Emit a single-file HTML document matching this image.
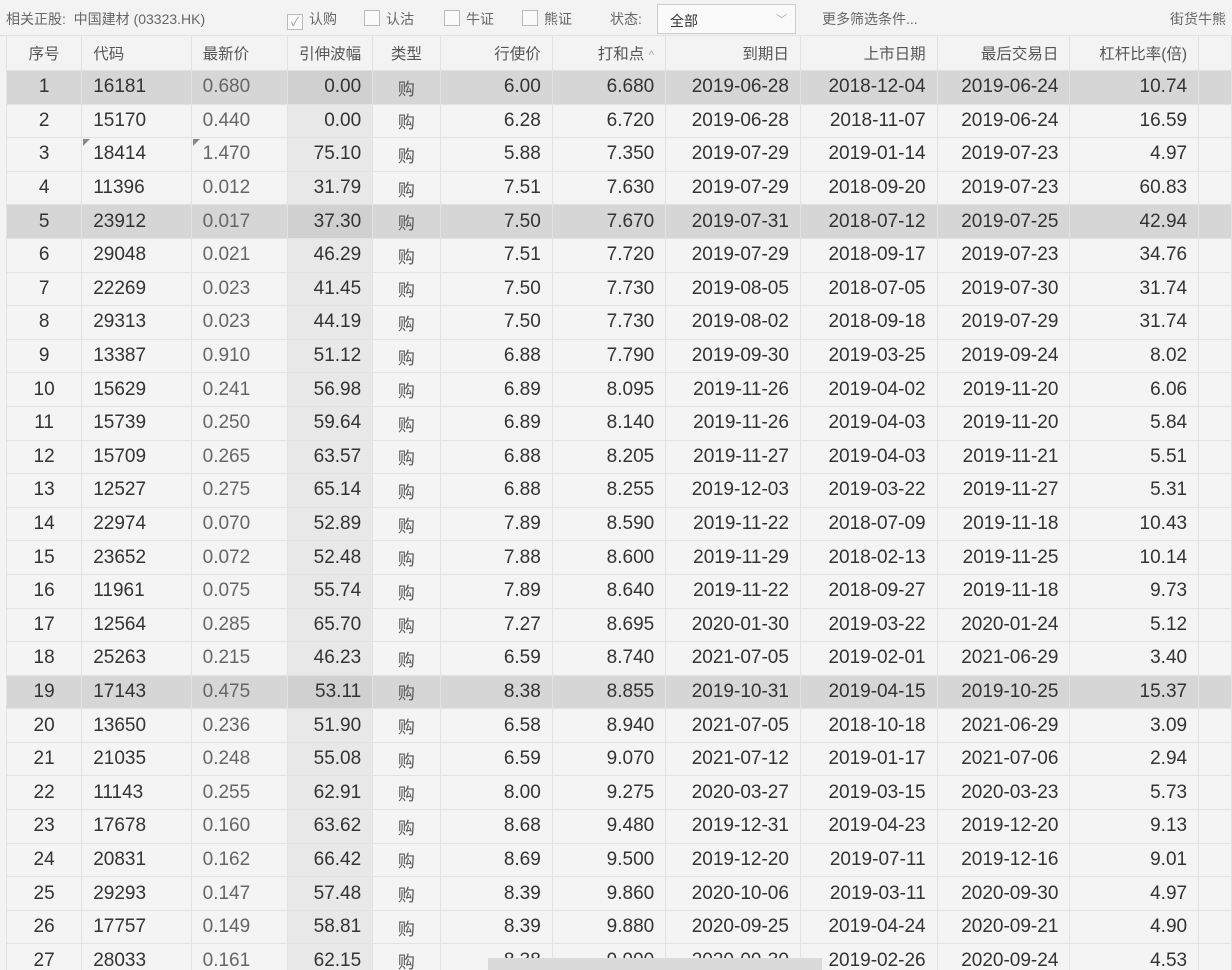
<!DOCTYPE html>
<html><head><meta charset="utf-8"><style>
html,body{margin:0;width:1232px;height:970px;overflow:hidden}
body{background:#f3f3f3;font-family:"Liberation Sans","Noto Sans CJK SC",sans-serif;color:#333;position:relative}
.tb{position:absolute;top:0;left:0;width:1232px;height:35px;background:#f3f3f3;border-bottom:1px solid #dcdcdc;font-size:14px;color:#666}
.tb span{position:absolute;top:9px;white-space:nowrap}
.cb{display:inline-block;width:14px;height:14px;border:1px solid #bbb;background:#fafafa;vertical-align:-2px;margin-right:6px;font-size:12px;line-height:14px;text-align:center;color:#999;font-style:normal}
.dd{position:absolute;left:657px;top:4px;width:139px;height:30px;border:1px solid #ccc;background:#fafafa;box-sizing:border-box}
table{position:absolute;left:6px;top:35px;border-collapse:collapse;table-layout:fixed;font-size:19px}
td,th{border:1px solid #e2e2e2;padding:0 11px;white-space:nowrap;overflow:hidden;box-sizing:border-box}
th{font-weight:normal;font-size:15.5px;color:#555;height:35px}
tr.d td{height:33.6px}
td{text-align:right;background:#f4f4f4}
td:nth-child(1),td:nth-child(5){text-align:center;padding:0}
td:nth-child(2),td:nth-child(3){text-align:left}
td:nth-child(3){color:#666}
td:nth-child(4){background:#e8e8e8}
td:nth-child(5){color:#555;font-size:17px}
tr.h td{background:#d6d6d6}
tr.h td:nth-child(4){background:#d0d0d0}
th{text-align:right}th:nth-child(1),th:nth-child(5){text-align:center;padding:0}th:nth-child(2),th:nth-child(3){text-align:left}
.tri{position:relative}
.tri:before{content:"";position:absolute;left:1px;top:1px;border-top:7px solid #888;border-right:7px solid transparent}
.sb{position:absolute;left:488px;top:958px;width:334px;height:12px;background:#dadada}
</style></head><body>
<div class="tb">
<span style="left:6px">相关正股:&nbsp; 中国建材 (03323.HK)</span>
<span style="left:287px"><i class="cb">✓</i>认购</span>
<span style="left:364px"><i class="cb"></i>认沽</span>
<span style="left:444px"><i class="cb"></i>牛证</span>
<span style="left:522px"><i class="cb"></i>熊证</span>
<span style="left:610px">状态:</span>
<div class="dd"><span style="left:12px;top:6px;color:#333">全部</span><span style="left:118px;top:6px;color:#aaa;font-size:11px">﹀</span></div>
<span style="left:822px">更多筛选条件...</span>
<span style="left:1170px">街货牛熊</span>
</div>
<table>
<colgroup><col style="width:76px"><col style="width:110px"><col style="width:97px"><col style="width:81px"><col style="width:68px"><col style="width:113px"><col style="width:114px"><col style="width:135px"><col style="width:137px"><col style="width:133px"><col style="width:129px"><col style="width:33px"></colgroup>
<tr><th>序号</th><th>代码</th><th>最新价</th><th>引伸波幅</th><th>类型</th><th>行使价</th><th>打和点 <span style="color:#aaa;font-size:12px">^</span></th><th>到期日</th><th>上市日期</th><th>最后交易日</th><th>杠杆比率(倍)</th><th></th></tr>
<tr class="d h"><td>1</td><td>16181</td><td>0.680</td><td>0.00</td><td>购</td><td>6.00</td><td>6.680</td><td>2019-06-28</td><td>2018-12-04</td><td>2019-06-24</td><td>10.74</td><td></td></tr>
<tr class="d"><td>2</td><td>15170</td><td>0.440</td><td>0.00</td><td>购</td><td>6.28</td><td>6.720</td><td>2019-06-28</td><td>2018-11-07</td><td>2019-06-24</td><td>16.59</td><td></td></tr>
<tr class="d"><td>3</td><td class="tri">18414</td><td class="tri">1.470</td><td>75.10</td><td>购</td><td>5.88</td><td>7.350</td><td>2019-07-29</td><td>2019-01-14</td><td>2019-07-23</td><td>4.97</td><td></td></tr>
<tr class="d"><td>4</td><td>11396</td><td>0.012</td><td>31.79</td><td>购</td><td>7.51</td><td>7.630</td><td>2019-07-29</td><td>2018-09-20</td><td>2019-07-23</td><td>60.83</td><td></td></tr>
<tr class="d h"><td>5</td><td>23912</td><td>0.017</td><td>37.30</td><td>购</td><td>7.50</td><td>7.670</td><td>2019-07-31</td><td>2018-07-12</td><td>2019-07-25</td><td>42.94</td><td></td></tr>
<tr class="d"><td>6</td><td>29048</td><td>0.021</td><td>46.29</td><td>购</td><td>7.51</td><td>7.720</td><td>2019-07-29</td><td>2018-09-17</td><td>2019-07-23</td><td>34.76</td><td></td></tr>
<tr class="d"><td>7</td><td>22269</td><td>0.023</td><td>41.45</td><td>购</td><td>7.50</td><td>7.730</td><td>2019-08-05</td><td>2018-07-05</td><td>2019-07-30</td><td>31.74</td><td></td></tr>
<tr class="d"><td>8</td><td>29313</td><td>0.023</td><td>44.19</td><td>购</td><td>7.50</td><td>7.730</td><td>2019-08-02</td><td>2018-09-18</td><td>2019-07-29</td><td>31.74</td><td></td></tr>
<tr class="d"><td>9</td><td>13387</td><td>0.910</td><td>51.12</td><td>购</td><td>6.88</td><td>7.790</td><td>2019-09-30</td><td>2019-03-25</td><td>2019-09-24</td><td>8.02</td><td></td></tr>
<tr class="d"><td>10</td><td>15629</td><td>0.241</td><td>56.98</td><td>购</td><td>6.89</td><td>8.095</td><td>2019-11-26</td><td>2019-04-02</td><td>2019-11-20</td><td>6.06</td><td></td></tr>
<tr class="d"><td>11</td><td>15739</td><td>0.250</td><td>59.64</td><td>购</td><td>6.89</td><td>8.140</td><td>2019-11-26</td><td>2019-04-03</td><td>2019-11-20</td><td>5.84</td><td></td></tr>
<tr class="d"><td>12</td><td>15709</td><td>0.265</td><td>63.57</td><td>购</td><td>6.88</td><td>8.205</td><td>2019-11-27</td><td>2019-04-03</td><td>2019-11-21</td><td>5.51</td><td></td></tr>
<tr class="d"><td>13</td><td>12527</td><td>0.275</td><td>65.14</td><td>购</td><td>6.88</td><td>8.255</td><td>2019-12-03</td><td>2019-03-22</td><td>2019-11-27</td><td>5.31</td><td></td></tr>
<tr class="d"><td>14</td><td>22974</td><td>0.070</td><td>52.89</td><td>购</td><td>7.89</td><td>8.590</td><td>2019-11-22</td><td>2018-07-09</td><td>2019-11-18</td><td>10.43</td><td></td></tr>
<tr class="d"><td>15</td><td>23652</td><td>0.072</td><td>52.48</td><td>购</td><td>7.88</td><td>8.600</td><td>2019-11-29</td><td>2018-02-13</td><td>2019-11-25</td><td>10.14</td><td></td></tr>
<tr class="d"><td>16</td><td>11961</td><td>0.075</td><td>55.74</td><td>购</td><td>7.89</td><td>8.640</td><td>2019-11-22</td><td>2018-09-27</td><td>2019-11-18</td><td>9.73</td><td></td></tr>
<tr class="d"><td>17</td><td>12564</td><td>0.285</td><td>65.70</td><td>购</td><td>7.27</td><td>8.695</td><td>2020-01-30</td><td>2019-03-22</td><td>2020-01-24</td><td>5.12</td><td></td></tr>
<tr class="d"><td>18</td><td>25263</td><td>0.215</td><td>46.23</td><td>购</td><td>6.59</td><td>8.740</td><td>2021-07-05</td><td>2019-02-01</td><td>2021-06-29</td><td>3.40</td><td></td></tr>
<tr class="d h"><td>19</td><td>17143</td><td>0.475</td><td>53.11</td><td>购</td><td>8.38</td><td>8.855</td><td>2019-10-31</td><td>2019-04-15</td><td>2019-10-25</td><td>15.37</td><td></td></tr>
<tr class="d"><td>20</td><td>13650</td><td>0.236</td><td>51.90</td><td>购</td><td>6.58</td><td>8.940</td><td>2021-07-05</td><td>2018-10-18</td><td>2021-06-29</td><td>3.09</td><td></td></tr>
<tr class="d"><td>21</td><td>21035</td><td>0.248</td><td>55.08</td><td>购</td><td>6.59</td><td>9.070</td><td>2021-07-12</td><td>2019-01-17</td><td>2021-07-06</td><td>2.94</td><td></td></tr>
<tr class="d"><td>22</td><td>11143</td><td>0.255</td><td>62.91</td><td>购</td><td>8.00</td><td>9.275</td><td>2020-03-27</td><td>2019-03-15</td><td>2020-03-23</td><td>5.73</td><td></td></tr>
<tr class="d"><td>23</td><td>17678</td><td>0.160</td><td>63.62</td><td>购</td><td>8.68</td><td>9.480</td><td>2019-12-31</td><td>2019-04-23</td><td>2019-12-20</td><td>9.13</td><td></td></tr>
<tr class="d"><td>24</td><td>20831</td><td>0.162</td><td>66.42</td><td>购</td><td>8.69</td><td>9.500</td><td>2019-12-20</td><td>2019-07-11</td><td>2019-12-16</td><td>9.01</td><td></td></tr>
<tr class="d"><td>25</td><td>29293</td><td>0.147</td><td>57.48</td><td>购</td><td>8.39</td><td>9.860</td><td>2020-10-06</td><td>2019-03-11</td><td>2020-09-30</td><td>4.97</td><td></td></tr>
<tr class="d"><td>26</td><td>17757</td><td>0.149</td><td>58.81</td><td>购</td><td>8.39</td><td>9.880</td><td>2020-09-25</td><td>2019-04-24</td><td>2020-09-21</td><td>4.90</td><td></td></tr>
<tr class="d"><td>27</td><td>28033</td><td>0.161</td><td>62.15</td><td>购</td><td>8.38</td><td>9.990</td><td>2020-09-30</td><td>2019-02-26</td><td>2020-09-24</td><td>4.53</td><td></td></tr>
</table>
<div class="sb"></div>
</body></html>
